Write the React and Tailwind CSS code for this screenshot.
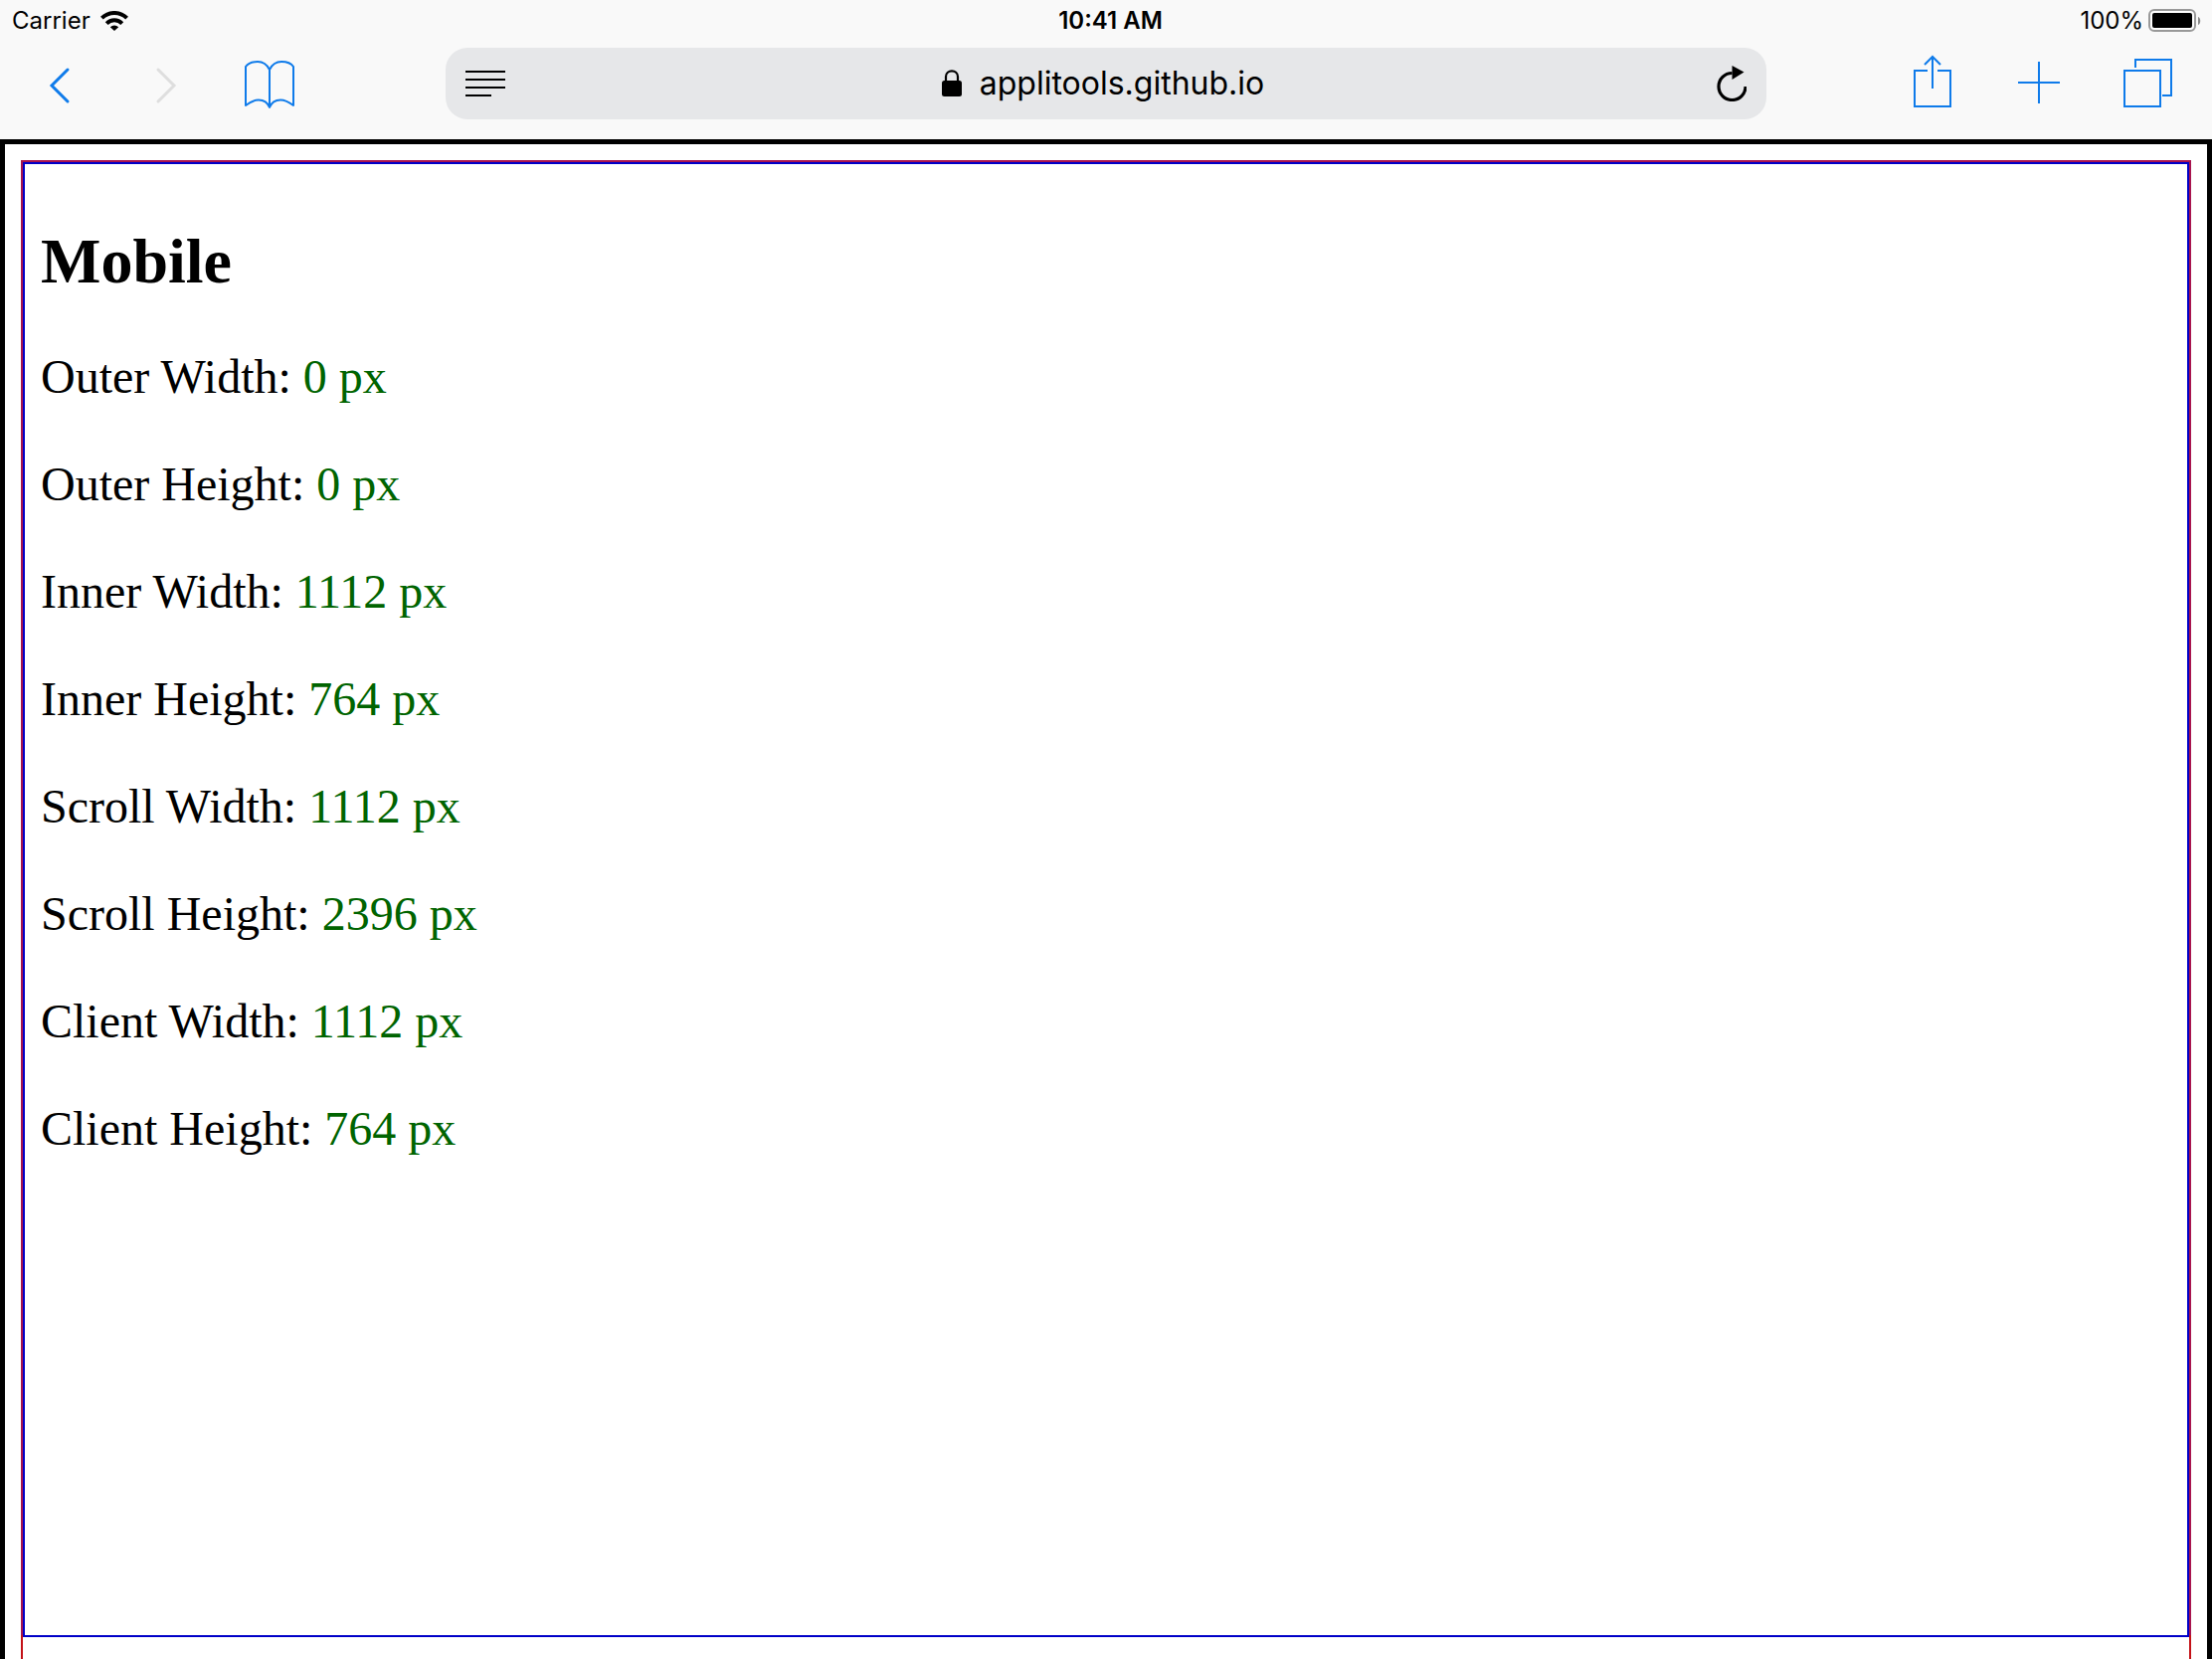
const measurements = [
  ["Outer Width", "0 px"],
  ["Outer Height", "0 px"],
  ["Inner Width", "1112 px"],
  ["Inner Height", "764 px"],
  ["Scroll Width", "1112 px"],
  ["Scroll Height", "2396 px"],
  ["Client Width", "1112 px"],
  ["Client Height", "764 px"],
];

function ToolButton({ label, disabled, children }) {
  return (
    <button
      type="button"
      aria-label={label}
      disabled={disabled}
      className="h-[72px] w-[60px] shrink-0 text-[#0f7bea] disabled:text-[#dedede]"
    >
      <svg viewBox="0 0 60 72" className="h-[72px] w-[60px]" fill="none" stroke="currentColor" strokeWidth="2">
        {children}
      </svg>
    </button>
  );
}

function StatusBar() {
  return (
    <div className="grid h-12 grid-cols-[1fr_auto_1fr] items-start pr-[11px] pl-3 text-2xl leading-[42px]">
      <div className="flex h-[42px] items-center gap-[10px]">
        <span>Carrier</span>
        <svg viewBox="0 0 28 20" className="h-5 w-7" aria-label="Wi-Fi">
          <g fill="none" stroke="#000" strokeWidth="4">
            <path d="M1.400 7.200A17.800 17.800 0 0 1 26.600 7.200" />
            <path d="M6.200 12.600A11 11 0 0 1 21.800 12.600" />
          </g>
          <path d="M14 20L9.800 16.200A6 6 0 0 1 18.200 16.200Z" />
        </svg>
      </div>
      <span className="pl-2 font-semibold">10:41 AM</span>
      <div className="flex h-[42px] items-center justify-end gap-1">
        <span>100%</span>
        <svg viewBox="0 0 54 24" className="h-6 w-[54px]" aria-label="Battery full">
          <rect x="2" y="1" width="46" height="21" rx="5" fill="#fff" stroke="#999" strokeWidth="2" />
          <rect x="5" y="4" width="40" height="15" rx="2" />
          <path d="M51 8C54 9 54 15 51 16Z" fill="#888" />
        </svg>
      </div>
    </div>
  );
}

function Toolbar() {
  return (
    <div className="flex h-[92px] items-start">
      <nav className="flex w-[448px] shrink-0 gap-[46px] pl-[30px]">
        <ToolButton label="Back">
          <path d="M38 22L22 38L38 54" strokeWidth="3" strokeLinecap="round" />
        </ToolButton>
        <ToolButton label="Forward" disabled>
          <path d="M23 22L39 38L23 54" strokeWidth="3" strokeLinecap="round" />
        </ToolButton>
        <ToolButton label="Bookmarks">
          <path
            strokeLinejoin="round"
            d="M29 22C26 16 22 14 17 14C12 14 7 16 5 19V58C9 55 13 52.500 18 52.500C23 52.500 27 55 29 60C31 55 35 52.500 40 52.500C45 52.500 49 55 53 58V19C51 16 46 14 41 14C36 14 32 16 29 22V60"
          />
        </ToolButton>
      </nav>
      <div className="flex h-[72px] min-w-0 flex-1 items-center justify-between rounded-[22px] bg-[#e6e7e9] px-5">
        <button type="button" aria-label="Reader view">
          <svg viewBox="0 0 40 26" className="h-[26px] w-10">
            <path d="M0 0H40V2H0ZM0 8H40V10H0ZM0 16H40V18H0ZM0 24H26V26H0Z" />
          </svg>
        </button>
        <a href="#page" className="flex items-center gap-[18px] pr-4 text-[32px] leading-10">
          <svg viewBox="0 0 20 28" className="h-7 w-5" aria-label="Secure">
            <rect y="11" width="20" height="16" rx="2.500" />
            <path d="M4 12V7C4 -0.600 16 -0.600 16 7V12" fill="none" stroke="#000" strokeWidth="2.200" />
          </svg>
          <span>applitools.github.io</span>
        </a>
        <button type="button" aria-label="Reload">
          <svg viewBox="0 0 30 36" className="h-9 w-[30px]">
            <path d="M29 21A13.500 13.500 0 1 1 15.500 7.500" fill="none" stroke="#000" strokeWidth="3.200" />
            <path d="M15.500 0L27.500 6.500L15.500 14Z" />
          </svg>
        </button>
      </div>
      <nav className="flex w-[448px] shrink-0 justify-end gap-[46px] pr-[38px]">
        <ToolButton label="Share">
          <path d="M24 23H11V59H47V23H34M29 41V9M21 17L29 9L37 17" />
        </ToolButton>
        <ToolButton label="New tab">
          <path d="M9 35H51M30 14V56" />
        </ToolButton>
        <ToolButton label="Show tabs">
          <path d="M10 23H46V59H10ZM21 20V12H57V48H48" />
        </ToolButton>
      </nav>
    </div>
  );
}

export default function App() {
  return (
    <div className="flex h-screen flex-col overflow-hidden bg-white text-black">
      <header className="shrink-0 bg-[#f9f9f9] font-['Inter',sans-serif]">
        <StatusBar />
        <Toolbar />
      </header>
      <div id="page" className="flex min-h-0 flex-1 flex-col border-x-[5px] border-t-[5px] border-black px-4 pt-4">
        <div className="flex flex-1 flex-col border-x-2 border-t-2 border-[#c41218] pb-[22px]">
          <main className="flex flex-1 flex-col gap-[52px] border-2 border-[#0000c8] px-4 pt-[62px] font-['Liberation_Serif',serif] shadow-[-2px_-2px_0_#a8144e,2px_-2px_0_#a8144e]">
            <h2 className="text-[64px] leading-[72px] font-bold">Mobile</h2>
            {measurements.map(([name, value]) => (
              <p key={name} className="text-5xl leading-[56px]">
                {name}: <span className="text-[#006400]">{value}</span>
              </p>
            ))}
          </main>
        </div>
      </div>
    </div>
  );
}
